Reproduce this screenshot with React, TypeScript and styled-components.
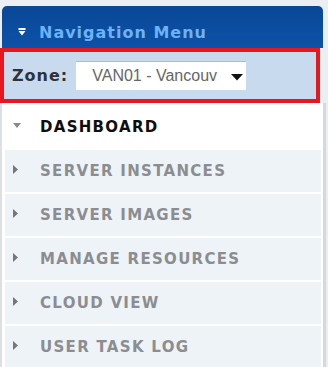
import React from 'react';
import styled, {createGlobalStyle} from 'styled-components';

const GlobalStyle = createGlobalStyle`
    body {
        margin: 0;
        background: #eceff2;
        font-family: 'DejaVu Sans', Verdana, sans-serif;
    }
`

const items = [
    {label: 'DASHBOARD', active: true},
    {label: 'SERVER INSTANCES', active: false},
    {label: 'SERVER IMAGES', active: false},
    {label: 'MANAGE RESOURCES', active: false},
    {label: 'CLOUD VIEW', active: false},
    {label: 'USER TASK LOG', active: false},
]

const CollapseIcon = () => (
    <svg width="8" height="8" viewBox="0 0 8 8">
        <rect x="0.5" y="0" width="7" height="2" fill="#ffffff"/>
        <polygon points="0.5,3 7.5,3 4,7.5" fill="#ffffff"/>
    </svg>
)

const Caret = ({open}: {open: boolean}) => open ? (
    <svg width="8" height="6" viewBox="0 0 8 6">
        <polygon points="0,0 8,0 4,5" fill="#8a8a8a"/>
    </svg>
) : (
    <svg width="6" height="9" viewBox="0 0 6 9">
        <polygon points="0,0 5,4.5 0,9" fill="#777777"/>
    </svg>
)

export default function App() {
    return (
        <>
            <GlobalStyle/>
            <Sidebar>
                <Header>
                    <CollapseIcon/>
                    <HeaderTitle>Navigation Menu</HeaderTitle>
                </Header>
                <ZoneBar>
                    <ZoneLabel>Zone:</ZoneLabel>
                    <SelectBox>
                        <SelectText>VAN01 - Vancouv</SelectText>
                        <SelectArrow>
                            <svg width="12" height="7" viewBox="0 0 12 7">
                                <polygon points="0,0 12,0 6,6.5" fill="#111111"/>
                            </svg>
                        </SelectArrow>
                    </SelectBox>
                </ZoneBar>
                <MenuList>
                    {items.map(item => (
                        <MenuItem key={item.label} active={item.active}>
                            <CaretSlot><Caret open={item.active}/></CaretSlot>
                            <ItemLabel active={item.active}>{item.label}</ItemLabel>
                        </MenuItem>
                    ))}
                </MenuList>
            </Sidebar>
        </>
    );
}

const Sidebar = styled.div`
    width: 326px;
    padding-top: 6px;
    display: flex;
    flex-direction: column;
`
const Header = styled.div`
    margin-left: 2px;
    width: 321px;
    height: 42px;
    box-sizing: border-box;
    padding: 10px 0 0 16px;
    display: flex;
    align-items: center;
    gap: 13px;
    background: linear-gradient(180deg, #0a4796 0%, #0c52a8 100%);
    border-radius: 5px 5px 0 0;
`
const HeaderTitle = styled.span`
    color: #6cb2f5;
    font-size: 16px;
    font-weight: bold;
    letter-spacing: 1px;
`
const ZoneBar = styled.div`
    width: 320px;
    height: 55px;
    box-sizing: border-box;
    border: 4px solid #e8161f;
    background: #c8dbee;
    display: flex;
    align-items: center;
    padding: 0 0 0 8px;
    gap: 8px;
`
const ZoneLabel = styled.span`
    font-size: 16px;
    font-weight: bold;
    letter-spacing: 1px;
    color: #2e3338;
`
const SelectBox = styled.div`
    width: 170px;
    height: 29px;
    box-sizing: border-box;
    background: #ffffff;
    border-top: 1px solid #b9b9b9;
    display: flex;
    align-items: center;
    padding: 0 3px 0 16px;
`
const SelectText = styled.span`
    white-space: nowrap;
    font-family: 'Liberation Sans', Arial, sans-serif;
    font-size: 16px;
    color: #666666;
`
const SelectArrow = styled.span`
    margin-left: auto;
    display: flex;
    padding-top: 2px;
`
const MenuList = styled.div`
    width: 326px;
    box-sizing: border-box;
    border-left: 2px solid #dcdfe3;
    border-right: 3px solid #d5d8dc;
    background: #ffffff;
    display: flex;
    flex-direction: column;
    gap: 2px;
    padding: 3px 2px 1px 3px;
`
const MenuItem = styled.div<{active: boolean}>`
    height: 42px;
    display: flex;
    align-items: center;
    background: ${p => p.active ? '#ffffff' : '#eef3f8'};
`
const CaretSlot = styled.span`
    width: 35px;
    padding-left: 8px;
    box-sizing: border-box;
    display: flex;
    align-items: center;
    margin-top: -3px;
`
const ItemLabel = styled.span<{active: boolean}>`
    font-size: 15px;
    font-weight: bold;
    color: ${p => p.active ? '#0e0e0e' : '#8b8d90'};
    letter-spacing: 1.3px;
`
